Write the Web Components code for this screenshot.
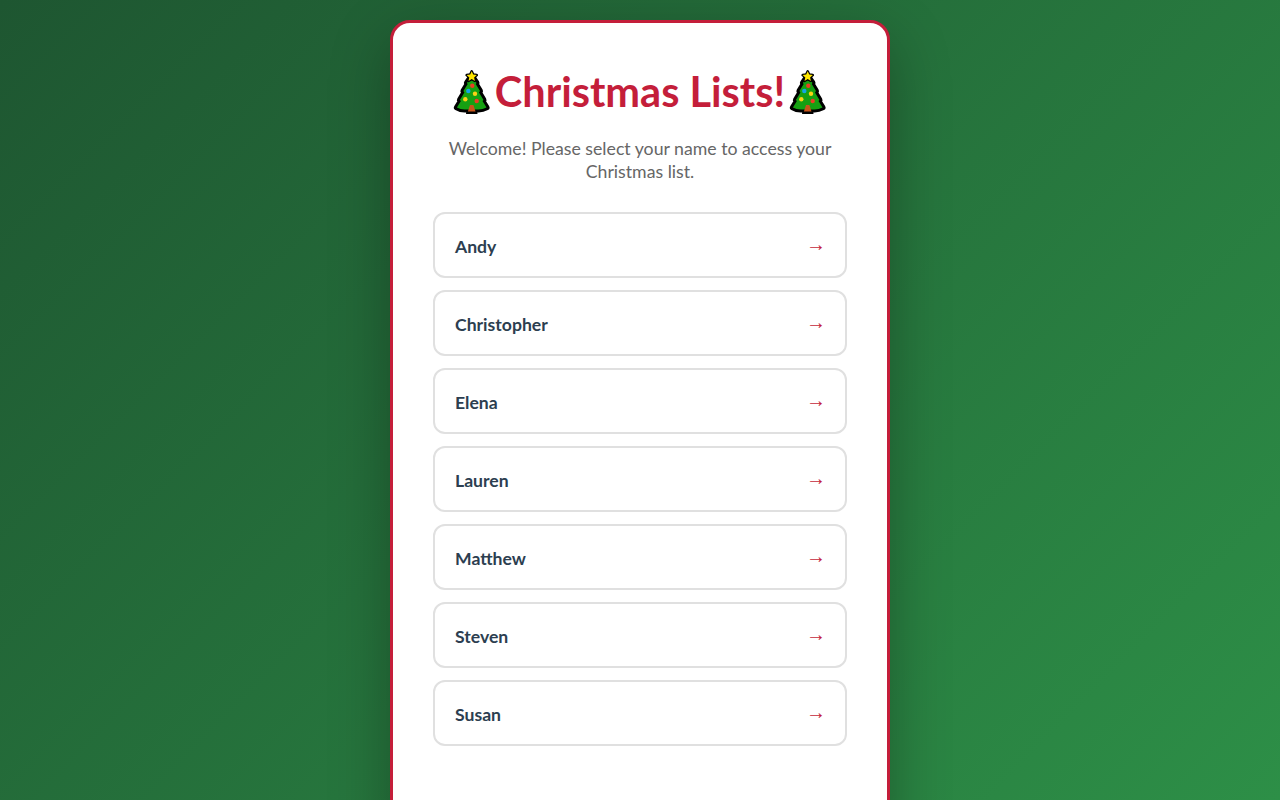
<!DOCTYPE html>
<html lang="en">
<head>
<meta charset="utf-8">
<title>Christmas Lists</title>
<style>
  html, body { margin: 0; height: 100%; overflow: hidden; }
  body {
    background: linear-gradient(135deg, #1e5631 0%, #2d8f47 100%);
    font-family: Lato, "Open Sans", sans-serif;
  }
</style>
</head>
<body>
<template id="tree-tpl">
  <style>
    :host { display: inline-block; width: 46px; height: 53px; vertical-align: top; }
    svg { display: block; width: 100%; height: 100%; }
  </style>
  <svg viewBox="-1 0 46 53">
    <path d="M16.500 46 H27 L27.500 51 H16 Z" fill="#000"/>
    <path d="M21.700 13 L26.500 20 L25.700 21 L30 28 L29 29.500 L33.500 37 L32.500 38 L36.500 44.500 Q32 47 27 46.500 H16.400 Q11 47 6.900 44.500 L10.900 38 L9.900 37 L14.400 29.500 L13.400 28 L17.700 21 L16.900 20 Z" fill="#16a012" stroke="#000" stroke-width="6" stroke-linejoin="round" paint-order="stroke"/>
    <path d="M20 42 h3.400 L25.500 48.500 H17.900 Z" fill="#c8551a"/>
    <path d="M21.700 8.300 l1.500 3.300 3.600 .4 -2.700 2.400 .8 3.500 -3.200 -1.800 -3.200 1.800 .8 -3.500 -2.700 -2.400 3.600 -.4 Z" fill="#ffe600" stroke="#000" stroke-width="2.500" stroke-linejoin="round" paint-order="stroke"/>
    <circle cx="22.300" cy="22.700" r="2.200" fill="#ea3e23"/>
    <circle cx="18.300" cy="28" r="2.200" fill="#12a5e8"/>
    <circle cx="25" cy="30.700" r="2.200" fill="#fcd116"/>
    <circle cx="15.300" cy="36.300" r="2.200" fill="#fcd116"/>
    <circle cx="26.700" cy="38" r="2.200" fill="#ea3e23"/>
  </svg>
</template>

<template id="card-tpl">
  <style>
    :host {
      display: block;
      box-sizing: border-box;
      width: 500px;
      margin: 20px auto 0;
      padding: 40px 40px 100px;
      background: #fff;
      border: 3px solid #c41e3a;
      border-radius: 20px;
      box-shadow: 0 20px 60px rgba(0, 0, 0, .3);
      text-align: center;
    }
    .title {
      margin: 0 0 17px;
      color: #c41e3a;
      font-size: 41.500px;
      font-weight: 700;
      line-height: 57px;
      white-space: nowrap;
    }
    .sub {
      margin: 0 0 29px;
      color: #666;
      font-size: 17.700px;
      line-height: 23px;
    }
    .list { display: flex; flex-direction: column; gap: 12px; }
  </style>
  <h1 class="title"><xmas-tree></xmas-tree>Christmas Lists!<xmas-tree></xmas-tree></h1>
  <p class="sub"><slot name="sub"></slot></p>
  <div class="list"><slot></slot></div>
</template>

<template id="name-tpl">
  <style>
    :host {
      display: flex;
      align-items: center;
      justify-content: space-between;
      box-sizing: border-box;
      height: 66px;
      padding: 0 20px;
      background: #fff;
      border: 2px solid #e0e0e0;
      border-radius: 12px;
      color: #2c3e50;
      font-size: 17.600px;
      font-weight: 700;
      text-align: left;
    }
    .name { padding-top: 2px; }
    .arrow { color: #c41e3a; font-family: "Liberation Sans", sans-serif; font-size: 20px; font-weight: 400; line-height: 20px; margin-right: -1px; padding-bottom: 2px; }
  </style>
  <span class="name"><slot></slot></span>
  <span class="arrow">→</span>
</template>

<xmas-card>
  <span slot="sub">Welcome! Please select your name to access your Christmas list.</span>
  <name-row>Andy</name-row>
  <name-row>Christopher</name-row>
  <name-row>Elena</name-row>
  <name-row>Lauren</name-row>
  <name-row>Matthew</name-row>
  <name-row>Steven</name-row>
  <name-row>Susan</name-row>
</xmas-card>

<script>
  class TplElement extends HTMLElement {
    constructor() {
      super();
      this.attachShadow({ mode: 'open' });
      const tpl = document.getElementById(this.constructor.tplId);
      this.shadowRoot.appendChild(tpl.content.cloneNode(true));
    }
  }
  class XmasTree extends TplElement { static get tplId() { return 'tree-tpl'; } }
  class XmasCard extends TplElement { static get tplId() { return 'card-tpl'; } }
  class NameRow extends TplElement { static get tplId() { return 'name-tpl'; } }

  customElements.define('xmas-tree', XmasTree);
  customElements.define('xmas-card', XmasCard);
  customElements.define('name-row', NameRow);
</script>
</body>
</html>
